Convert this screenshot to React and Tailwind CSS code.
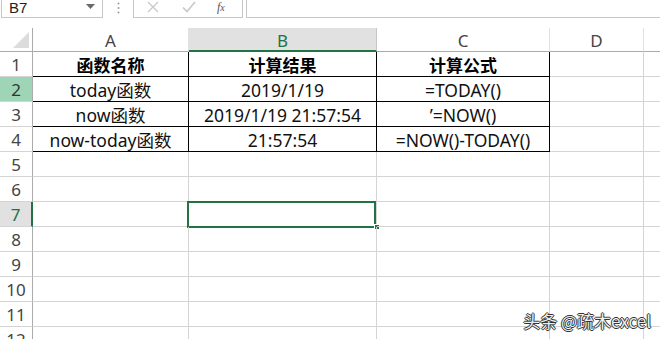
import React from "react";

const cols = [
  { key: "A", w: 156 },
  { key: "B", w: 188 },
  { key: "C", w: 173 },
  { key: "D", w: 94 },
  { key: "", w: 60 },
];

const data = {
  1: ["函数名称", "计算结果", "计算公式"],
  2: ["today函数", "2019/1/19", "=TODAY()"],
  3: ["now函数", "2019/1/19 21:57:54", "’=NOW()"],
  4: ["now-today函数", "21:57:54", "=NOW()-TODAY()"],
};

const font = { fontFamily: '"Noto Sans", "Noto Sans CJK SC", sans-serif' };

function RowHeader({ n }) {
  let cls = "bg-white border-r border-[#ababab] text-[#444]";
  if (n === 2) cls = "bg-[#9fd5b7] border-r border-[#ababab] text-[#333]";
  if (n === 7) cls = "bg-[#e1e1e1] border-r-2 border-[#217346] text-[#217346]";
  return (
    <div className={`w-[33px] h-[25px] shrink-0 border-b border-b-[#d4d4d4] flex items-end justify-center pb-[1px] text-[17px] leading-none ${cls}`}>
      <span className="pb-[2px]">{n}</span>
    </div>
  );
}

function Row({ n }) {
  const d = data[n];
  return (
    <div className="flex">
      <RowHeader n={n} />
      {cols.map((c, i) => {
        const inTable = d && i < 3;
        const border = inTable
          ? "border-r border-b border-black"
          : "border-r border-b border-[#d4d4d4]";
        const bold = n === 1 && inTable;
        const sel = n === 7 && i === 1;
        return (
          <div
            key={i}
            style={{ width: c.w }}
            className={`relative h-[25px] shrink-0 flex items-center justify-center ${border} ${bold ? "font-bold text-[17px] text-black" : "text-[17.5px] text-[#111]"}`}
          >
            {inTable ? <span className="leading-none pt-[3px] whitespace-nowrap">{d[i]}</span> : null}
            {sel ? (
              <>
                <div className="absolute left-[-2px] top-[-1px] w-[189px] h-[27px] border-2 border-[#217346]" />
                <div className="absolute right-[-4px] bottom-[-4px] w-[6px] h-[6px] bg-[#217346] border border-white" />
              </>
            ) : null}
          </div>
        );
      })}
    </div>
  );
}

export default function App() {
  return (
    <div className="w-[660px] h-[339px] overflow-hidden bg-white relative" style={font}>
      {/* formula bar */}
      <div className="h-[28px] flex items-start">
        <div className="ml-[1px] w-[102px] h-[18px] border-x border-b border-[#c6c6c6] flex items-center justify-between px-[7px] pb-[2px]">
          <span className="text-[15px] text-[#222] leading-none" style={{ fontFamily: '"Liberation Sans", sans-serif' }}>B7</span>
          <svg width="9" height="6" viewBox="0 0 9 6" className="mt-[-2px]"><path d="M0 0 H9 L4.5 5 Z" fill="#6a6a6a" /></svg>
        </div>
        <div className="w-[30px] h-[18px] flex items-center justify-center pb-[3px]">
          <svg width="3" height="12" viewBox="0 0 3 12"><circle cx="1.5" cy="1.5" r="1" fill="#9a9a9a" /><circle cx="1.5" cy="6" r="1" fill="#9a9a9a" /><circle cx="1.5" cy="10.5" r="1" fill="#9a9a9a" /></svg>
        </div>
        <div className="w-[110px] h-[18px] border-x border-b border-[#c6c6c6] flex items-center pb-[3px]">
          <svg width="12" height="12" viewBox="0 0 12 12" className="ml-[13px]"><path d="M1 1 L11 11 M11 1 L1 11" stroke="#c8c8c8" strokeWidth="1.3" /></svg>
          <svg width="14" height="12" viewBox="0 0 14 12" className="ml-[23px]"><path d="M1 6.5 L5 10.5 L13 1" stroke="#c8c8c8" strokeWidth="1.6" fill="none" /></svg>
          <span className="ml-[21px] text-[12px] italic text-[#555] leading-none" style={{ fontFamily: '"Liberation Serif", serif' }}>f<span className="text-[10px]">x</span></span>
        </div>
        <div className="ml-[3px] flex-1 h-[18px] border-l border-b border-[#c6c6c6]" />
      </div>

      {/* column headers */}
      <div className="flex h-[24px]">
        <div className="w-[33px] h-[24px] shrink-0 border-r border-b border-[#ababab] relative">
          <svg width="16" height="16" viewBox="0 0 16 16" className="absolute left-[13px] top-[4px]"><path d="M16 0 V16 H0 Z" fill="#dcdcdc" /></svg>
        </div>
        {cols.map((c, i) => {
          const active = i === 1;
          return (
            <div
              key={i}
              style={{ width: c.w }}
              className={`h-[24px] shrink-0 flex items-center justify-center text-[17px] leading-none border-r ${active ? "bg-[#e1e1e1] border-r-[#c6c6c6] border-b-2 border-b-[#217346] text-[#217346]" : "border-r-[#e1e1e1] border-b border-b-[#ababab] text-[#444]"}`}
            >
              <span className="pt-[2px]">{c.key}</span>
            </div>
          );
        })}
      </div>

      {/* rows */}
      <div className="flex flex-col">
        {[1, 2, 3, 4, 5, 6, 7, 8, 9, 10, 11, 12].map((n) => (
          <Row key={n} n={n} />
        ))}
      </div>

      {/* watermark */}
      <div
        className="absolute right-[9px] bottom-[10px] text-[17px] leading-none text-[#eeeeee] [text-shadow:1px_0_0_#333,-1px_0_0_#333,0_1px_0_#333,0_-1px_0_#333]"
        style={{ fontFamily: '"Noto Sans CJK SC", sans-serif' }}
      >
        头条 @疏木excel
      </div>
    </div>
  );
}
